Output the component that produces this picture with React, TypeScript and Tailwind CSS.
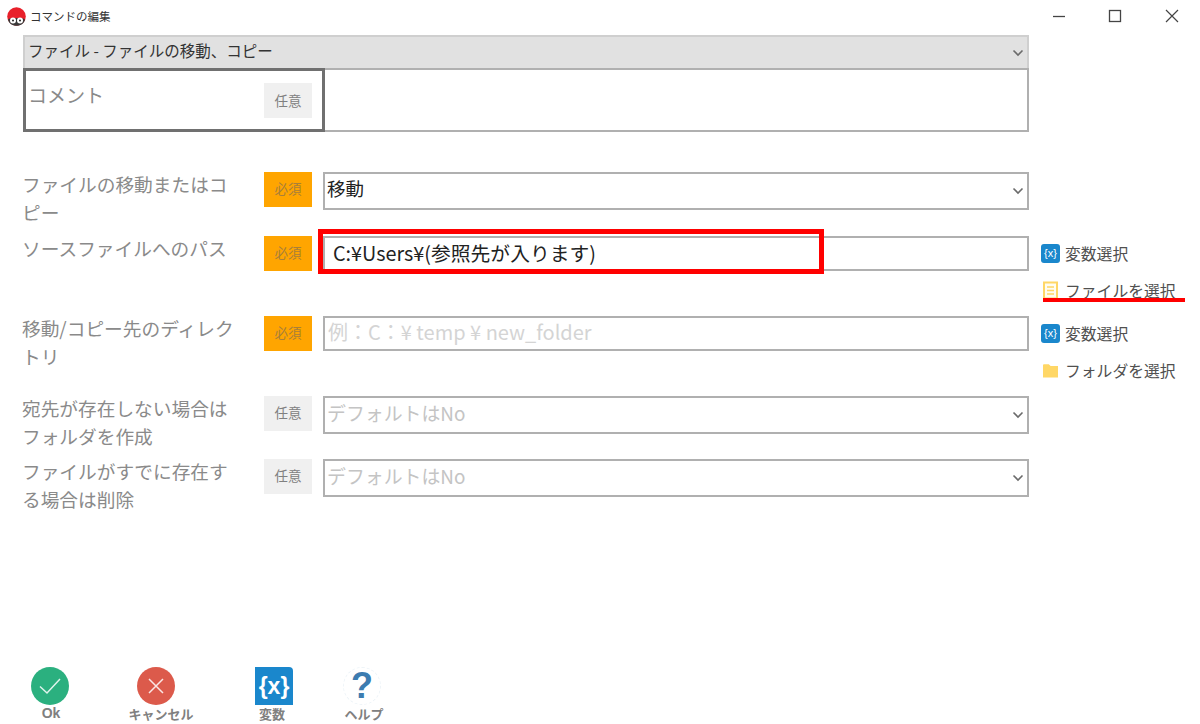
type FieldRowProps = {
  label: string;
  required?: boolean;
  heightClass: string;
  children: React.ReactNode;
  side?: React.ReactNode;
};

const font = "font-['Noto_Sans_CJK_JP','Noto_Sans',sans-serif]";

function Chevron() {
  return (
    <svg width="12" height="8" viewBox="0 0 12 8" fill="none" className="shrink-0">
      <path d="M1.5 1.5 6 6l4.5-4.5" stroke="#6b6b6b" strokeWidth="1.6" />
    </svg>
  );
}

function Badge({ required }: { required?: boolean }) {
  return (
    <span
      className={`flex h-[35px] w-[48px] shrink-0 items-center justify-center pb-[2px] text-[13.5px] ${
        required ? "bg-[#ffa500] text-[#a87f3a]" : "bg-[#f0f0f0] text-[#808080]"
      }`}
    >
      {required ? "必須" : "任意"}
    </span>
  );
}

function VarIcon() {
  return (
    <span className="flex h-[19px] w-[19px] items-center justify-center rounded-[3px] bg-[#1a87cc] font-['Liberation_Sans',sans-serif] text-[11px] text-white">
      {"{x}"}
    </span>
  );
}

function FileIcon() {
  return (
    <svg width="19" height="19" viewBox="0 0 19 19" fill="none">
      <rect x="3" y="1.5" width="13" height="16" stroke="#ffd766" strokeWidth="2" fill="#fffdf2" />
      <path d="M6 6h7M6 9.500h7M6 13h7" stroke="#ffd766" strokeWidth="1.4" />
    </svg>
  );
}

function FolderIcon() {
  return (
    <svg width="19" height="19" viewBox="0 0 19 19">
      <path d="M2 4.500c0-.8.5-1.300 1.200-1.300h4.600L9.600 5H17v11.500H2z" fill="#ffd766" />
    </svg>
  );
}

function SideAction({ icon, text }: { icon: React.ReactNode; text: string }) {
  return (
    <div className="flex h-[37px] items-center gap-[5px] whitespace-nowrap text-[15.8px] text-[#505050]">
      <span className="flex w-[19px] items-center justify-center">{icon}</span>
      <span>{text}</span>
    </div>
  );
}

function SelectBox({ value, muted }: { value: string; muted?: boolean }) {
  return (
    <div className="flex h-[38px] w-[706px] items-center justify-between border-2 border-[#b0b0b0] pl-[2px] pr-[3px]">
      <span className={`pb-[4px] ${muted ? "text-[18.9px] text-[#c4c4c4]" : "text-[18.5px] text-[#222222]"}`}>{value}</span>
      <Chevron />
    </div>
  );
}

function FieldRow({ label, required, heightClass, children, side }: FieldRowProps) {
  return (
    <div className={`flex items-start ${heightClass}`}>
      <div className="w-[241px] shrink-0">
        <p className="-ml-px -mt-[2px] w-[218px] text-[18.7px] leading-[28px] text-[#8a8a8a]">{label}</p>
      </div>
      <Badge required={required} />
      <div className="ml-[11px]">{children}</div>
      {side && <div className="ml-[12px] -mt-px flex flex-col">{side}</div>}
    </div>
  );
}

function FooterButton({
  label,
  labelClass,
  marginClass,
  children,
}: {
  label: string;
  labelClass?: string;
  marginClass: string;
  children: React.ReactNode;
}) {
  return (
    <div className={`flex w-[38px] flex-col items-center ${marginClass}`}>
      <div className="h-[38px] w-[38px]">{children}</div>
      <span className={`whitespace-nowrap text-[13px] font-bold leading-[17px] text-[#808080] ${labelClass ?? ""}`}>
        {label}
      </span>
    </div>
  );
}

export default function App() {
  return (
    <div className={`flex h-[724px] w-[1200px] flex-col overflow-hidden bg-white ${font}`}>
      {/* title bar */}
      <header className="flex h-[35px] shrink-0 items-center pl-[7px]">
        <svg width="19" height="19" viewBox="0 0 19 19" className="-mt-[3px]">
          <circle cx="9.500" cy="9.500" r="9.300" fill="#e8202a" />
          <path d="M1 12.500c1.500-1 3-1.500 8.500-1.500s7 .5 8.500 1.500c-.5 3.500-4 6.300-8.500 6.300S1.500 16 1 12.500z" fill="#3a3a3a" />
          <circle cx="6" cy="13.500" r="3" fill="#fff" />
          <circle cx="13" cy="13.500" r="3" fill="#fff" />
          <circle cx="6" cy="13.500" r="1" fill="#222" />
          <circle cx="13" cy="13.500" r="1" fill="#222" />
        </svg>
        <span className="ml-[4px] -mt-[2px] text-[11.5px] text-[#333333]">コマンドの編集</span>
        <div className="-mt-[3px] ml-auto flex items-center">
          <svg width="14" height="14" viewBox="0 0 14 14" className="mr-[42px]">
            <path d="M1 7.500h12" stroke="#444" strokeWidth="1.300" />
          </svg>
          <svg width="14" height="14" viewBox="0 0 14 14" className="mr-[43px]">
            <rect x="1.500" y="1.500" width="11" height="11" fill="none" stroke="#444" strokeWidth="1.300" />
          </svg>
          <svg width="14" height="14" viewBox="0 0 14 14" className="mr-[21px]">
            <path d="M1 1l12 12M13 1 1 13" stroke="#444" strokeWidth="1.200" />
          </svg>
        </div>
      </header>

      <main className="relative flex flex-col pl-[23px]">
        <div className="flex h-[33px] w-[1006px] items-center justify-between border-2 border-b-0 border-[#cfcfcf] bg-[#e1e1e1] pl-[3px] pr-[3px]">
          <span className="pb-[3px] text-[15.5px] text-[#333333]">ファイル - ファイルの移動、コピー</span>
          <Chevron />
        </div>

        {/* comment */}
        <div className="flex h-[64px] w-[1006px]">
          <div className="flex w-[302px] shrink-0 items-start justify-between border-[3px] border-[#707070] pr-[10px]">
            <span className="ml-[2px] mt-[10px] text-[19px] leading-[28px] text-[#8a8a8a]">コメント</span>
            <span className="mt-[12px] flex h-[35px] w-[48px] items-center justify-center bg-[#f0f0f0] text-[13.5px] text-[#808080]">
              任意
            </span>
          </div>
          <div className="flex-1 border-2 border-l-0 border-[#b0b0b0]" />
        </div>

        <div className="h-[40px]" />

        <FieldRow label="ファイルの移動またはコピー" required heightClass="h-[64px]">
          <SelectBox value="移動" />
        </FieldRow>

        <FieldRow
          label="ソースファイルへのパス"
          required
          heightClass="h-[80px]"
          side={
            <>
              <SideAction icon={<VarIcon />} text="変数選択" />
              <SideAction icon={<FileIcon />} text="ファイルを選択" />
            </>
          }
        >
          <div className="flex h-[35px] w-[706px] items-center border-2 border-[#b0b0b0] pb-[2px] pl-[8px] text-[19.8px] text-[#222222]">
            C:¥Users¥(参照先が入ります)
          </div>
        </FieldRow>

        <FieldRow
          label="移動/コピー先のディレクトリ"
          required
          heightClass="h-[80px]"
          side={
            <>
              <SideAction icon={<VarIcon />} text="変数選択" />
              <SideAction icon={<FolderIcon />} text="フォルダを選択" />
            </>
          }
        >
          <div className="flex h-[35px] w-[706px] items-center border-2 border-[#b0b0b0] pb-[3px] pl-[3px] text-[20px] text-[#d4d4d4]">
            例：C：¥ temp ¥ new_folder
          </div>
        </FieldRow>

        <FieldRow label="宛先が存在しない場合はフォルダを作成" heightClass="h-[63px]">
          <SelectBox value="デフォルトはNo" muted />
        </FieldRow>

        <FieldRow label="ファイルがすでに存在する場合は削除" heightClass="h-[63px]">
          <SelectBox value="デフォルトはNo" muted />
        </FieldRow>

        {/* red annotations drawn over the form */}
        <div className="absolute left-[318px] top-[194px] h-[45px] w-[506px] border-[5px] border-[#ff0000]" />
        <div className="absolute left-[1043px] top-[263px] h-[4px] w-[142px] bg-[#ff0000]" />
      </main>

      <footer className="mt-auto flex h-[57px] shrink-0 items-start">
        <FooterButton label="Ok" marginClass="ml-[31px]" labelClass="ml-[2px] font-['Liberation_Sans',sans-serif] text-[14px]">
          <svg width="38" height="38" viewBox="0 0 38 38">
            <circle cx="19" cy="19" r="19" fill="#2bb07f" />
            <path d="M9 19.500 16 26 29 12" fill="none" stroke="#ffffff" strokeOpacity="0.85" strokeWidth="1.500" />
          </svg>
        </FooterButton>
        <FooterButton label="キャンセル" marginClass="ml-[68px]" labelClass="ml-[10px]">
          <svg width="38" height="38" viewBox="0 0 38 38">
            <circle cx="19" cy="19" r="19" fill="#dc5a4b" />
            <path d="M12 12l14 14M26 12 12 26" fill="none" stroke="#ffffff" strokeOpacity="0.85" strokeWidth="1.500" />
          </svg>
        </FooterButton>
        <FooterButton label="変数" marginClass="ml-[80px]" labelClass="-ml-[4px]">
          <div className="flex h-[38px] w-[38px] items-center justify-center rounded-tr-[4px] bg-[#1a87cc] font-['Liberation_Sans',sans-serif] text-[23px] font-semibold text-white">
            {"{x}"}
          </div>
        </FooterButton>
        <FooterButton label="ヘルプ" marginClass="ml-[50px]" labelClass="ml-[4px]">
          <div className="flex h-[38px] w-[38px] items-center justify-center rounded-full border border-dashed border-[#eef4f8] font-['Liberation_Sans',sans-serif] text-[36px] font-bold text-[#3d7cb0]">
            ?
          </div>
        </FooterButton>
      </footer>
    </div>
  );
}
